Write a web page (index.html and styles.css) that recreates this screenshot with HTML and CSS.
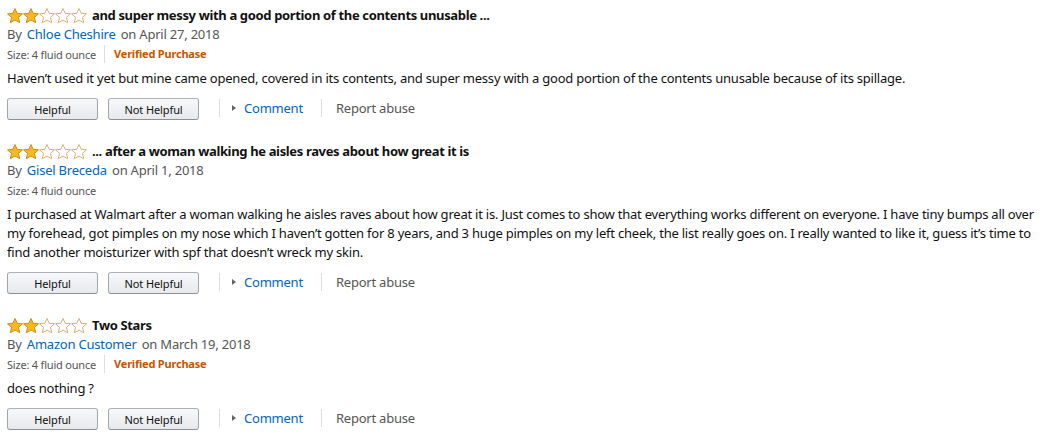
FILE: index.html
```html
<!DOCTYPE html>
<html lang="en">
<head>
    <meta charset="UTF-8">
    <title>Customer reviews</title>
    <link rel="stylesheet" href="styles.css">
</head>
<body>
    <svg width="0" height="0" class="defs">
        <defs>
            <path id="star" d="M8 0.5 L10.2 5.3 L15.5 5.8 L11.5 9.4 L12.7 14.8 L8 12 L3.3 14.8 L4.5 9.4 L0.5 5.8 L5.8 5.3 Z"/>
        </defs>
    </svg>

    <div class="reviews">
        <div class="review">
            <div class="review-head">
                <span class="stars">
                    <svg class="star full" viewBox="0 0 16 16"><use href="#star"/></svg>
                    <svg class="star full" viewBox="0 0 16 16"><use href="#star"/></svg>
                    <svg class="star" viewBox="0 0 16 16"><use href="#star"/></svg>
                    <svg class="star" viewBox="0 0 16 16"><use href="#star"/></svg>
                    <svg class="star" viewBox="0 0 16 16"><use href="#star"/></svg>
                </span>
                <span class="review-title">and super messy with a good portion of the contents unusable ...</span>
            </div>
            <div class="review-by">By <a href="#">Chloe Cheshire</a> on April 27, 2018</div>
            <div class="review-meta">
                <span>Size: 4 fluid ounce</span>
                <span class="verified">Verified Purchase</span>
            </div>
            <p class="review-text">Haven’t used it yet but mine came opened, covered in its contents, and super messy with a good portion of the contents unusable because of its spillage.</p>
            <div class="review-actions">
                <button class="vote">Helpful</button>
                <button class="vote">Not Helpful</button>
                <span class="action comment"><span class="caret"></span><a href="#">Comment</a></span>
                <span class="action report">Report abuse</span>
            </div>
        </div>

        <div class="review">
            <div class="review-head">
                <span class="stars">
                    <svg class="star full" viewBox="0 0 16 16"><use href="#star"/></svg>
                    <svg class="star full" viewBox="0 0 16 16"><use href="#star"/></svg>
                    <svg class="star" viewBox="0 0 16 16"><use href="#star"/></svg>
                    <svg class="star" viewBox="0 0 16 16"><use href="#star"/></svg>
                    <svg class="star" viewBox="0 0 16 16"><use href="#star"/></svg>
                </span>
                <span class="review-title">... after a woman walking he aisles raves about how great it is</span>
            </div>
            <div class="review-by">By <a href="#">Gisel Breceda</a> on April 1, 2018</div>
            <div class="review-meta">
                <span>Size: 4 fluid ounce</span>
            </div>
            <p class="review-text">I purchased at Walmart after a woman walking he aisles raves about how great it is. Just comes to show that everything works different on everyone. I have tiny bumps all over my forehead, got pimples on my nose which I haven’t gotten for 8 years, and 3 huge pimples on my left cheek, the list really goes on. I really wanted to like it, guess it’s time to find another moisturizer with spf that doesn’t wreck my skin.</p>
            <div class="review-actions">
                <button class="vote">Helpful</button>
                <button class="vote">Not Helpful</button>
                <span class="action comment"><span class="caret"></span><a href="#">Comment</a></span>
                <span class="action report">Report abuse</span>
            </div>
        </div>

        <div class="review">
            <div class="review-head">
                <span class="stars">
                    <svg class="star full" viewBox="0 0 16 16"><use href="#star"/></svg>
                    <svg class="star full" viewBox="0 0 16 16"><use href="#star"/></svg>
                    <svg class="star" viewBox="0 0 16 16"><use href="#star"/></svg>
                    <svg class="star" viewBox="0 0 16 16"><use href="#star"/></svg>
                    <svg class="star" viewBox="0 0 16 16"><use href="#star"/></svg>
                </span>
                <span class="review-title">Two Stars</span>
            </div>
            <div class="review-by">By <a href="#">Amazon Customer</a> on March 19, 2018</div>
            <div class="review-meta">
                <span>Size: 4 fluid ounce</span>
                <span class="verified">Verified Purchase</span>
            </div>
            <p class="review-text">does nothing ?</p>
            <div class="review-actions">
                <button class="vote">Helpful</button>
                <button class="vote">Not Helpful</button>
                <span class="action comment"><span class="caret"></span><a href="#">Comment</a></span>
                <span class="action report">Report abuse</span>
            </div>
        </div>
    </div>
</body>
</html>
```

FILE: styles.css
```css
body {
    font-family: 'Noto Sans', 'Open Sans', sans-serif;
    font-size: 13px;
    line-height: 19px;
    letter-spacing: -0.22px;
    color: #111;
    margin: 0;
    padding: 6px 7px 0 7px;
    background-color: #fff;
}
.defs {
    position: absolute;
}
a {
    color: #0066c0;
    text-decoration: none;
}
.reviews {
    display: flex;
    flex-direction: column;
    gap: 22px;
}
.review-head {
    display: flex;
    align-items: center;
    height: 19px;
}
.stars {
    display: flex;
    margin-right: 5px;
}
.star {
    width: 16px;
    height: 16px;
    fill: #fff;
    stroke: #cfa862;
    stroke-width: 0.9;
}
.star.full {
    fill: #f8b81f;
    stroke: #c48a14;
}
.review-title {
    font-weight: 700;
    letter-spacing: -0.35px;
}
.review-by {
    color: #555;
}
.review-by a {
    margin: 0 2px;
}
.review-meta {
    display: flex;
    align-items: center;
    height: 20px;
    font-size: 11px;
    letter-spacing: -0.2px;
    color: #555;
}
.verified {
    color: #c45500;
    font-weight: 700;
    border-left: 1px solid #ddd;
    margin-left: 8px;
    padding-left: 9px;
    line-height: 18px;
}
.review-text {
    margin: 5px 0 0 0;
}
.review-actions {
    display: flex;
    align-items: center;
    margin-top: 10px;
    height: 22px;
}
.vote {
    font-family: inherit;
    font-size: 11px;
    letter-spacing: -0.1px;
    color: #111;
    height: 22px;
    width: 91px;
    margin-right: 10px;
    padding: 0;
    border: 1px solid #adb1b8;
    border-color: #adb1b8 #a2a6ac #8d9096;
    border-radius: 3px;
    background: linear-gradient(to bottom, #f7f8fa, #e7e9ec);
    cursor: pointer;
}
.action {
    display: flex;
    align-items: center;
    font-size: 13px;
    border-left: 1px solid #ddd;
    line-height: 18px;
    margin-bottom: 3px;
}
.comment {
    margin-left: 10px;
    padding-left: 12px;
}
.caret {
    width: 0;
    height: 0;
    border-top: 3px solid transparent;
    border-bottom: 3px solid transparent;
    border-left: 4px solid #666;
    margin-right: 8px;
}
.report {
    margin-left: 18px;
    padding-left: 14px;
    color: #555;
}
```
